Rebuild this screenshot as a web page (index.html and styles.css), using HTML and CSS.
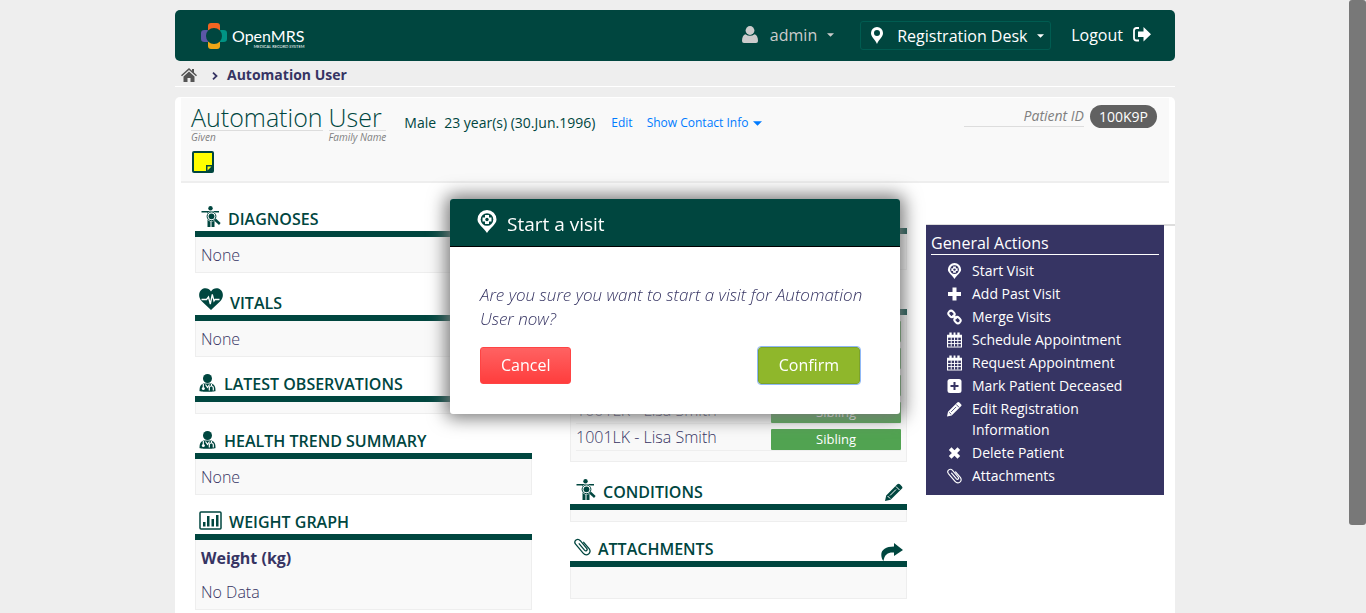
FILE: index.html
```html
<!DOCTYPE html>
<html lang="en">
<head>
<meta charset="utf-8">
<meta name="viewport" content="width=device-width, initial-scale=1">
<title>OpenMRS - Automation User</title>
<link rel="stylesheet" href="styles.css">
</head>
<body>
<svg class="sprite" aria-hidden="true">
  <symbol id="i-body" viewBox="0 0 20 21"><circle cx="9.500" cy="2.300" r="2.200"/><path d="M.5 5h17.500v1.500h-4l-.5 6.500v8h-3v-6h-1v6H6.500v-8L6 6.500H.5z"/><circle cx="10.500" cy="10.300" r="5.200" fill="#fff"/><circle cx="10.500" cy="10.300" r="2.900"/><circle cx="10.500" cy="10.300" r="4.400" fill="none" stroke="currentColor" stroke-width="1"/><path d="M14 13.500l4.800 4.500" stroke="currentColor" stroke-width="2.400"/></symbol>
  <symbol id="i-heart" viewBox="0 0 24 22"><path d="M12 22L3 13.500C-1 9.500-.5 4 2.500 1.700 5.500-.7 9.800 0 12 3.400 14.200 0 18.500-.7 21.500 1.700c3 2.300 3.500 7.800-.5 11.800z"/><path d="M2.500 11.500h5l2-2.500 1.800 7 2-9.500 1.700 6.500 1-1.500h4.500" fill="none" stroke="#fff" stroke-width="1.300"/></symbol>
  <symbol id="i-doctor" viewBox="0 0 17 18"><circle cx="8.500" cy="4.500" r="4.500"/><path d="M4.500 9.500h8c3 1 4 3 4 7.500-1 1-15 1-16 0 0-4.500 1-6.500 4-7.500z"/><path d="M4.300 10v3.500M12.500 10v2M10.300 16.500v-2.500q0-2 2-2t2 2v2.500M6.500 10.500l2 3 2-3" fill="none" stroke="#fff" stroke-width="1.200"/><circle cx="4.300" cy="14.500" r="1.500" fill="#fff"/></symbol>
  <symbol id="i-chart" viewBox="0 0 23 19"><rect x="1" y="1" width="21" height="17" rx="1" fill="none" stroke="currentColor" stroke-width="1.500"/><path d="M4 11h2.500v4.500H4zM8 5h2.500v10.500H8zM12.500 8H15v7.500h-2.500zM17 4h2.500v11.500H17z"/></symbol>
  <symbol id="i-pencil" viewBox="0 0 18 18"><path d="M0 18l1.200-5.600L12.300 1.300q1.300-1.300 2.600 0l1.900 1.900q1.300 1.300 0 2.600L5.600 16.800z"/><path d="M11 3.500l3.600 3.600M2.600 13l2.500 2.500M5 12.500l6-6" stroke="var(--paper)" stroke-width="1" fill="none"/></symbol>
  <symbol id="i-clip" viewBox="0 0 17 18"><path d="M5.200 5.800l5.300 6.300c1.500 1.700 3.500 0 2.200-1.700L6.300 2.700C3.500-.4-.8 3 1.600 6.200l7.500 8.900c3.500 4 9.200-.3 6-4.500L9.700 4.300" fill="none" stroke="currentColor" stroke-width="1.300" stroke-linecap="round"/></symbol>
  <symbol id="i-share" viewBox="0 0 22 18"><path d="M13 0l9 7-9 6V9.500C7.500 9 3.500 11 2.500 18 1.300 16.800.3 14.500.3 12 .3 6.500 5 3.500 13 3.500z"/></symbol>
  <symbol id="i-visit" viewBox="0 0 20 23"><path d="M10 0a9.500 9.500 0 0 1 9.500 9.500c0 4.500-6 8-9.500 13.500C6.500 17.500.5 14 .5 9.500A9.500 9.500 0 0 1 10 0z"/><circle cx="10" cy="9.500" r="6.300" fill="var(--paper)"/><path d="M8 5h4v2.500h2.500v4H12V14H8v-2.500H5.500v-4H8z"/><circle cx="10" cy="9.500" r="1.700" fill="var(--paper)"/></symbol>
  <symbol id="i-plus" viewBox="0 0 13 13"><path d="M4.500 0h4v4.500H13v4H8.500V13h-4V8.500H0v-4h4.500z"/></symbol>
  <symbol id="i-link" viewBox="0 0 15 15"><g fill="none" stroke="currentColor" stroke-width="2"><rect x="1.300" y="1.700" width="6.500" height="5.300" rx="2.600" transform="rotate(45 4.500 4.300)"/><rect x="7.200" y="8" width="6.500" height="5.300" rx="2.600" transform="rotate(45 10.500 10.700)"/><path d="M5.700 5.500l3.700 4"/></g></symbol>
  <symbol id="i-cal" viewBox="0 0 16 16"><path d="M0 2.500h2.500V0h2.500v2.500h2V0h2v2.500h2V0h2.500v2.500H16V16H0z"/><path d="M1.200 5.500h13.600v9.500H1.200z" fill="var(--paper)"/><path d="M1 8.500h14M1 11.800h14M4.500 5v10M8 5v10M11.500 5v10" stroke="currentColor" stroke-width="1"/></symbol>
  <symbol id="i-box" viewBox="0 0 15 15"><rect x=".5" y=".5" width="14" height="14" rx="2.500"/><path d="M7.500 3.500v8M3.500 7.500h8" stroke="var(--paper)" stroke-width="2"/></symbol>
  <symbol id="i-x" viewBox="0 0 12 12"><path d="M2 2l8 8M10 2l-8 8" stroke="currentColor" stroke-width="3.500"/></symbol>
  <symbol id="i-caret" viewBox="0 0 8 4"><path d="M0 0h8L4 4z"/></symbol>
</svg>

<div class="shell">
  <header class="topbar">
    <a class="brand" href="#" aria-label="OpenMRS home">
      <svg class="brand-mark" viewBox="0 0 26 26" aria-hidden="true">
        <path d="M7 8V3q0-3 3-3h6q3 0 3 3v5z" fill="#f26522"/>
        <path d="M7 18v5q0 3 3 3h6q3 0 3-3v-5z" fill="#eea616"/>
        <path d="M7 7H3.500Q0 7 0 10v6q0 3 3.500 3H7z" fill="#5b57a6"/>
        <path d="M19 7h3.500Q26 7 26 10v6q0 3-3.500 3H19z" fill="#009384"/>
        <circle cx="13" cy="13" r="8" fill="#00463f"/>
      </svg>
      <span class="brand-text"><span class="brand-name">OpenMRS</span><span class="brand-sub">MEDICAL RECORD SYSTEM</span></span>
    </a>
    <nav class="nav">
      <button class="nav-user" type="button">
        <svg class="ico-user" viewBox="0 0 16 17" aria-hidden="true"><circle cx="8" cy="4.500" r="4.400"/><path d="M3.500 8.300q4.500 3 9 0Q16 9.500 16 15q0 2-2 2H2q-2 0-2-2 0-5.500 3.500-6.700z"/></svg>
        <span>admin</span>
        <svg class="caret"><use href="#i-caret"/></svg>
      </button>
      <label class="nav-place">
        <svg class="ico-pin" viewBox="0 0 12 17" role="img" aria-label="Location"><path fill-rule="evenodd" d="M6 0a6 6 0 0 1 6 6c0 4-4 6-6 11C4 12 0 10 0 6a6 6 0 0 1 6-6zm0 3a3 3 0 1 0 0 6 3 3 0 0 0 0-6z"/></svg>
        <select><option>Registration Desk</option></select>
        <svg class="caret"><use href="#i-caret"/></svg>
      </label>
      <a class="nav-out" href="#">Logout
        <svg class="ico-out" viewBox="0 0 18 15" aria-hidden="true"><path d="M6 1H3.500Q1 1 1 3.500v7.500q0 2.500 2.500 2.500H6" fill="none" stroke="currentColor" stroke-width="1.800"/><path d="M10.500 0L18 7.200l-7.500 7.200v-4.400H5V4.500h5.500z"/></svg>
      </a>
    </nav>
  </header>

  <nav class="crumbs" aria-label="Breadcrumb">
    <a href="#" aria-label="Home"><svg class="ico-home" viewBox="0 0 16 14"><path d="M8 0l3 2.700V1h2v3.500l3 2.700-1 1.100L8 2.100 1 8.300 0 7.200z"/><path d="M8 3.500l5.500 5V14H9.500v-4h-3v4H2.500V8.500z"/></svg></a>
    <svg class="ico-chev" viewBox="0 0 6 8" aria-hidden="true"><path d="M1 .7L4.500 4 1 7.300" fill="none" stroke="currentColor" stroke-width="1.800"/></svg>
    <span>Automation User</span>
  </nav>

  <main class="content">
    <section class="patient">
      <div class="patient-row">
        <h1 class="name">
          <span class="name-part"><span class="name-text">Automation</span><em>Given</em></span>
          <span class="name-part"><span class="name-text">User</span><em>Family Name</em></span>
        </h1>
        <div class="demo">
          <span>Male</span><span>23 year(s) (30.Jun.1996)</span>
          <a class="edit" href="#">Edit</a>
          <a class="contact" href="#">Show Contact Info <svg><use href="#i-caret"/></svg></a>
        </div>
        <div class="ident"><em>Patient ID</em><span class="ident-no">100K9P</span></div>
      </div>
      <button class="note" type="button" aria-label="Sticky note">
        <svg viewBox="0 0 22 22"><rect width="22" height="22" rx="2" fill="#00463f"/><path d="M2 2h18v12h-6v6H2z" fill="#ff0"/><path d="M15.500 19.500v-4h4z" fill="#ff0"/></svg>
      </button>
    </section>

    <div class="board">
      <div class="column">
        <section class="card">
          <h2><svg class="ico-body"><use href="#i-body"/></svg>DIAGNOSES</h2>
          <div class="card-body"><p>None</p></div>
        </section>
        <section class="card">
          <h2><svg class="ico-heart"><use href="#i-heart"/></svg>VITALS</h2>
          <div class="card-body"><p>None</p></div>
        </section>
        <section class="card">
          <h2><svg class="ico-doc"><use href="#i-doctor"/></svg>LATEST OBSERVATIONS</h2>
          <div class="card-body"></div>
        </section>
        <section class="card">
          <h2><svg class="ico-doc"><use href="#i-doctor"/></svg>HEALTH TREND SUMMARY</h2>
          <div class="card-body"><p>None</p></div>
        </section>
        <section class="card">
          <h2><svg class="ico-chart"><use href="#i-chart"/></svg>WEIGHT GRAPH</h2>
          <div class="card-body graph"><h3>Weight (kg)</h3><p>No Data</p></div>
        </section>
      </div>

      <div class="column middle">
        <section class="card"><div class="card-head"></div><div class="card-body"><p></p></div></section>
        <section class="card">
          <div class="card-head"></div>
          <div class="card-body kin">
            <ul>
              <li><span></span><b></b></li>
              <li><span></span><b></b></li>
              <li><span></span><b></b></li>
              <li><span>1001LK - Lisa Smith</span><b>Sibling</b></li>
              <li><span>1001LK - Lisa Smith</span><b>Sibling</b></li>
            </ul>
          </div>
        </section>
        <section class="card tall">
          <h2><svg class="ico-body"><use href="#i-body"/></svg>CONDITIONS <a class="tool" href="#" aria-label="Edit conditions"><svg class="ico-edit"><use href="#i-pencil"/></svg></a></h2>
          <div class="card-body"></div>
        </section>
        <section class="card">
          <h2><svg class="ico-clip"><use href="#i-clip"/></svg>ATTACHMENTS <a class="tool" href="#" aria-label="Open attachments"><svg class="ico-share"><use href="#i-share"/></svg></a></h2>
          <div class="card-body thumbs"></div>
        </section>
      </div>

      <aside class="side">
        <div class="actions">
          <h2>General Actions</h2>
          <ul>
            <li><a href="#"><svg><use href="#i-visit"/></svg><span>Start Visit</span></a></li>
            <li><a href="#"><svg class="act-small"><use href="#i-plus"/></svg><span>Add Past Visit</span></a></li>
            <li><a href="#"><svg><use href="#i-link"/></svg><span>Merge Visits</span></a></li>
            <li><a href="#"><svg><use href="#i-cal"/></svg><span>Schedule Appointment</span></a></li>
            <li><a href="#"><svg><use href="#i-cal"/></svg><span>Request Appointment</span></a></li>
            <li><a href="#"><svg><use href="#i-box"/></svg><span>Mark Patient Deceased</span></a></li>
            <li><a href="#"><svg><use href="#i-pencil"/></svg><span>Edit Registration Information</span></a></li>
            <li><a href="#"><svg class="act-small"><use href="#i-x"/></svg><span>Delete Patient</span></a></li>
            <li><a href="#"><svg><use href="#i-clip"/></svg><span>Attachments</span></a></li>
          </ul>
        </div>
      </aside>
    </div>
  </main>
</div>

<div class="overlay">
  <div class="dialog" role="dialog" aria-modal="true" aria-labelledby="dialog-title">
    <div class="dialog-head"><svg><use href="#i-visit"/></svg><h2 id="dialog-title">Start a visit</h2></div>
    <div class="dialog-body">
      <p>Are you sure you want to start a visit for Automation User now?</p>
      <div class="dialog-buttons">
        <button class="btn cancel" type="button">Cancel</button>
        <button class="btn confirm" type="button">Confirm</button>
      </div>
    </div>
  </div>
</div>
<div class="rail" aria-hidden="true"><div class="thumb"></div></div>
</body>
</html>
```

FILE: styles.css
```css
:root {
  --green: #00463f;
  --navy: #363463;
  --soft: #f9f9f9;
  --line: #eee;
  --paper: #fff;
}

* { box-sizing: border-box; }

body {
  margin: 0;
  padding-right: 16px;
  background: #eee;
  color: var(--navy);
  font: 300 16px/24px "Open Sans", sans-serif;
}

h1, h2, h3, p, ul { margin: 0; padding: 0; font-size: inherit; font-weight: inherit; }
ul { list-style: none; }
a { color: inherit; text-decoration: none; }
button, select { font: inherit; color: inherit; border: 0; background: none; padding: 0; }
svg { fill: currentColor; flex: none; display: block; }
.sprite { position: absolute; width: 0; height: 0; }
.caret { width: 7px; height: 4px; }

.shell {
  display: flex;
  flex-direction: column;
  max-width: 1000px;
  min-height: 100vh;
  margin: 0 auto;
  padding-top: 10px;
}

/* Top bar */
.topbar {
  display: flex;
  align-items: center;
  justify-content: space-between;
  height: 51px;
  padding: 0 24px 0 26px;
  border-radius: 5px;
  background: var(--green);
  color: #fff;
  font-weight: 400;
}
.brand { display: flex; align-items: center; gap: 5px; }
.brand-mark { width: 26px; height: 26px; }
.brand-text { display: flex; flex-direction: column; padding-top: 4px; font-family: Lato, sans-serif; }
.brand-name { font-size: 16px; line-height: 18px; }
.brand-sub { font-size: 4px; line-height: 4px; text-align: right; }
.nav { display: flex; align-items: center; gap: 20px; }
.nav-user { display: flex; align-items: center; gap: 10px; margin-right: 6px; padding-bottom: 2px; color: #ccc; }
.ico-user { width: 16px; height: 17px; margin-right: 2px; }
.nav-place {
  display: flex;
  align-items: center;
  gap: 9px;
  height: 29px;
  padding: 0 6px 0 10px;
  border: 1px solid #005c51;
  border-radius: 3px;
}
.nav-place select { appearance: none; }
.ico-pin { width: 12px; height: 17px; margin-right: 5px; }
.nav-out { display: flex; align-items: center; gap: 10px; padding-bottom: 2px; }
.ico-out { width: 18px; height: 15px; }

/* Breadcrumbs */
.crumbs {
  display: flex;
  align-items: center;
  height: 26px;
  margin-bottom: 10px;
  padding: 2px 6px 0;
  border-bottom: 1px solid #fff;
  font-size: 14px;
  font-weight: 700;
}
.ico-home { width: 16px; height: 14px; color: #555; }
.ico-chev { width: 6px; height: 8px; margin: 2px 9px 0 15px; }

/* Patient header */
.content {
  flex: 1;
  padding: 1px 0 3px;
  border-radius: 5px 5px 0 0;
  background: #fff;
}
.patient {
  margin: 0 6px;
  padding: 6px 12px 8px 10px;
  border-bottom: 2px solid var(--line);
  background: var(--soft);
  color: var(--green);
}
.patient-row { display: flex; align-items: flex-start; }
.name { display: flex; gap: 6px; }
.name-part { display: flex; flex-direction: column; }
.name-text { border-bottom: 1px solid #ddd; font-size: 25px; line-height: 26px; }
.name-part em { color: #808080; font-size: 10px; line-height: 12px; font-weight: 400; }
.demo { display: flex; align-items: center; gap: 8px; margin-left: 18px; padding-top: 7px; font-size: 14px; font-weight: 400; }
.demo a { color: #007bff; font-size: 12px; }
.edit { margin: 0 6px 0 8px; }
.contact { display: flex; align-items: center; gap: 5px; }
.contact svg { width: 9px; height: 5px; }
.ident { display: flex; gap: 6px; margin-left: auto; font-size: 14px; line-height: 23px; font-weight: 400; padding-top: 1px; }
.ident em { width: 120px; height: 22px; border-bottom: 1px solid #ddd; color: #808080; line-height: 22px; text-align: right; }
.ident-no { padding: 0 9px; border-radius: 12px; background: #616161; color: #fff; }
.note { display: block; margin: 8px 0 0 1px; }
.note svg { width: 22px; height: 22px; }

/* Three columns */
.board {
  display: grid;
  grid-template-columns: minmax(0, 337fr) minmax(0, 356fr) minmax(0, 249fr);
  column-gap: 19px;
  padding-left: 20px;
}
.column { padding-top: 8px; }
.middle { padding-top: 6px; margin-left: 19px; }
.card h2 {
  display: flex;
  align-items: flex-end;
  padding: 15px 4px 0;
  border-bottom: 6px solid var(--green);
  color: var(--green);
  font-weight: 600;
}
.card-head { height: 45px; border-bottom: 6px solid var(--green); }
.card-body {
  min-height: 12px;
  padding: 6px 5px 5px;
  border: 1px solid var(--line);
  border-top: 0;
  background: var(--soft);
}
.card-body:empty { padding: 0; }
.card-body p { min-height: 24px; }
.graph h3 { padding-bottom: 10px; font-weight: 700; }
.card .thumbs { min-height: 32px; }
.card .kin { padding: 1px 5px 10px; }
.tall h2 { padding-top: 17px; }
.tool { margin-left: auto; }
.ico-body { width: 20px; height: 21px; margin: 0 7px 4px 2px; }
.ico-heart { width: 24px; height: 22px; margin: 0 7px 5px 0; }
.ico-doc { width: 17px; height: 18px; margin: 0 8px 4px 0; }
.ico-chart { width: 23px; height: 19px; margin: 0 7px 4px 0; }
.ico-edit { width: 18px; height: 18px; margin-bottom: 3px; }
.ico-clip { width: 17px; height: 18px; margin: 0 7px 5px 0; }
.ico-share { width: 22px; height: 18px; }

.kin li { display: flex; height: 27px; align-items: flex-end; border-bottom: 1px solid var(--line); }
.kin span { flex: 1; padding-bottom: 1px; }
.kin b { width: 130px; height: 21px; border-radius: 1px; background: #51a351; color: #fff; font-size: 13px; line-height: 21px; font-weight: 400; text-align: center; }

/* Action list */
.side { margin-top: 41px; border-top: 2px solid #ddd; }
.actions { --paper: var(--navy); margin: -1px 11px 0 0; padding: 8px 5px 7px; background: var(--navy); color: #fff; font-weight: 400; }
.actions h2 { border-bottom: 1px solid #fff; line-height: 21px; }
.actions ul { padding: 5px 0 0 15px; font-size: 14px; line-height: 21px; }
.actions li { padding-bottom: 2px; }
.actions a { display: grid; grid-template-columns: 16px minmax(0, 1fr); column-gap: 10px; padding-right: 30px; }
.actions svg { width: 15px; height: 16px; margin-top: 3px; justify-self: center; }
.actions .act-small { width: 13px; }

/* Dialog */
.overlay { position: fixed; inset: 0 16px 0 0; display: flex; align-items: center; justify-content: center; }
.dialog { width: 450px; border-radius: 3px; background: #fff; box-shadow: 0 0 18px 4px #777; overflow: hidden; }
.dialog-head {
  --paper: var(--green);
  display: flex;
  align-items: center;
  gap: 10px;
  height: 48px;
  padding: 2px 27px 0;
  border-bottom: 1px solid #000;
  background: var(--green);
  color: #fff;
  font-weight: 400;
}
.dialog-head svg { width: 20px; height: 23px; margin-bottom: 4px; }
.dialog-head h2 { font-size: 19px; }
.dialog-body { padding: 36px 28px 30px 30px; }
.dialog-body p { font-size: 17px; font-style: italic; }
.dialog-buttons { display: flex; justify-content: space-between; margin-top: 16px; padding-right: 12px; }
.btn { height: 37px; padding: 0 20px 2px; border: 1px solid; border-radius: 3px; color: #fff; font-weight: 400; }
.cancel { border-color: #f44; background: linear-gradient(#ff6262, #ff3d3d); }
.confirm { border-color: #7da328; background: #8fb72b; outline: 1px solid #8fb8f6; }

/* Page scroll rail */
.rail { position: fixed; inset: 0 0 0 auto; width: 17px; background: #eee; }
.thumb { height: 525px; border-radius: 3px; background: #787878; }
```
